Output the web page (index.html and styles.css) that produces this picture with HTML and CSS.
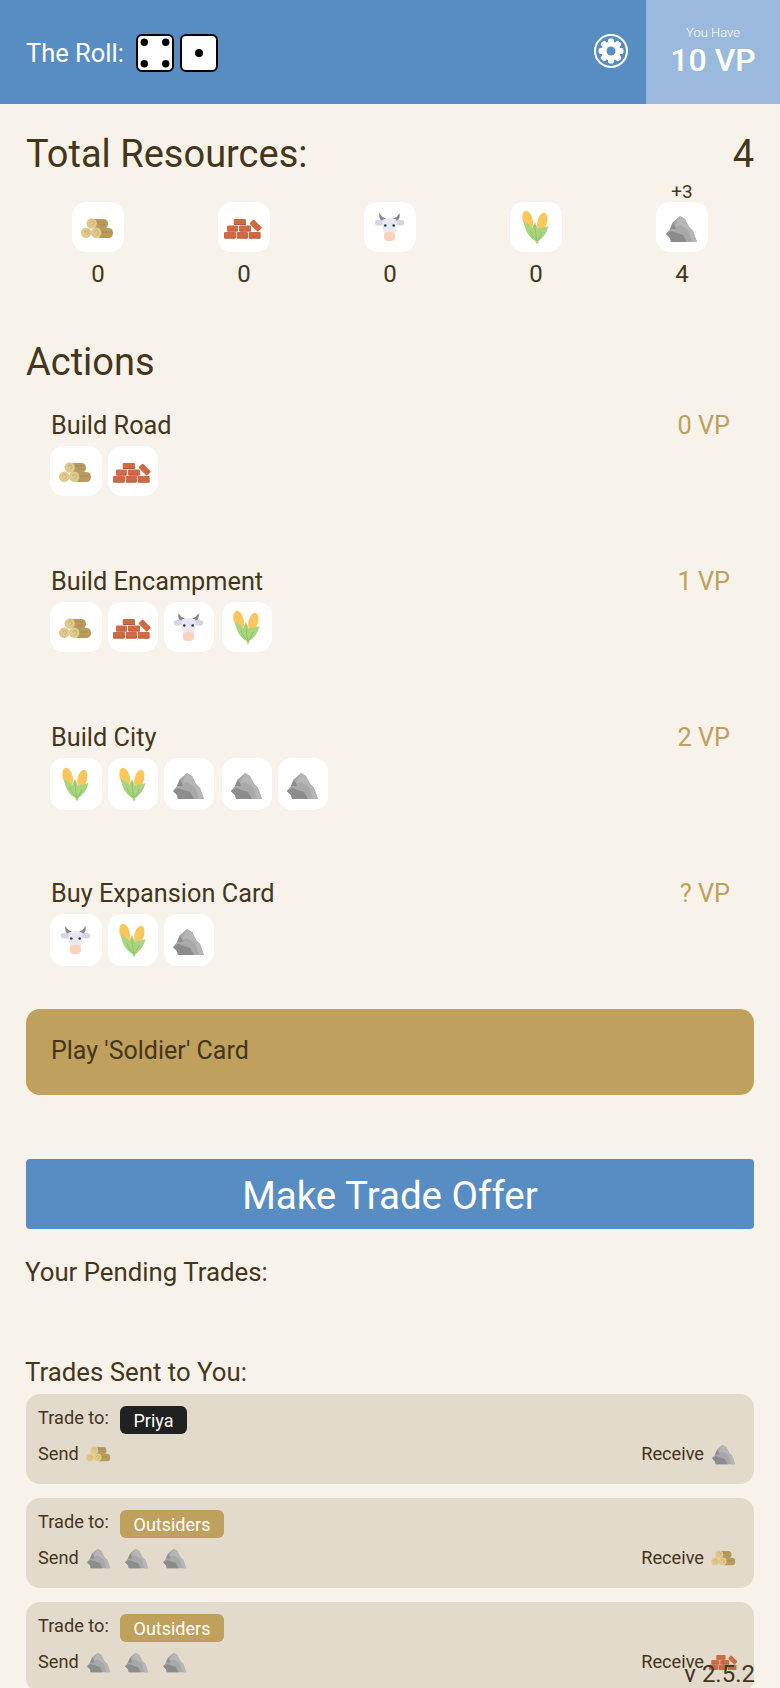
FILE: index.html
```html
<!doctype html>
<html lang="en">

<head>
  <title>Settlers Player</title>
  <meta charset="utf-8" />
  <link rel="stylesheet" href="styles.css">
</head>

<body>
  <!-- shared resource icons, all drawn in a 40x40 box -->
  <svg class="defs" width="0" height="0" aria-hidden="true">
    <symbol id="wood" viewBox="0 0 40 40">
      <rect x="12" y="12" width="18" height="9.5" rx="4.5" fill="#b89c5e" />
      <rect x="18" y="21" width="17" height="10" rx="4.5" fill="#b89c5e" />
      <path d="M18 15h10M23 25h10M22 18h6" stroke="#a58a4e" stroke-width=".8" />
      <circle cx="13.7" cy="16.5" r="5.2" fill="#e0c98c" />
      <circle cx="8.2" cy="25.7" r="5.2" fill="#e0c98c" />
      <circle cx="18.2" cy="25.7" r="5.2" fill="#e0c98c" />
      <path d="M12 16a2 2 0 1 1 2 2M6.500 25.500a2 2 0 1 1 2 2M16.500 25.500a2 2 0 1 1 2 2" fill="none" stroke="#c4a968" stroke-width=".8" />
    </symbol>
    <symbol id="brick" viewBox="0 0 40 40">
      <g fill="#cf6a45">
        <rect x="9.700" y="12" width="12.300" height="6" rx="1" />
        <rect x="3" y="18.500" width="11" height="6" rx="1" />
        <rect x="15" y="18.500" width="12" height="6" rx="1" />
        <rect x="0" y="25" width="12" height="6.500" rx="1" />
        <rect x="12.700" y="25" width="11.300" height="6.500" rx="1" />
        <rect x="24.700" y="25" width="12" height="6.500" rx="1" />
        <rect x="25.700" y="15.700" width="12" height="6" rx="1" transform="rotate(45 31.700 18.700)" />
      </g>
      <path d="M.5 31h11M13.200 31H23.500M25.200 31h11M3.500 24h10M15.500 24h11M10.200 17.500h11.300" stroke="#b8583a" stroke-width="1" />
    </symbol>
    <symbol id="cow" viewBox="0 0 40 40">
      <path d="M9.500 6c-1 4 .5 7.500 4 9l3-3c-3-1-5.500-3-7-6zM29.500 6c1 4-.5 7.500-4 9l-3-3c3-1 5.500-3 7-6z" fill="#8a8a8c" />
      <ellipse cx="9" cy="15.700" rx="4.200" ry="3" fill="#d6d4e6" />
      <ellipse cx="30" cy="15.700" rx="4.200" ry="3" fill="#d6d4e6" />
      <path d="M12.500 13c3-2.500 11-2.500 14 0 .8 5-.6 11-2.500 15h-9c-1.900-4-3.300-10-2.500-15z" fill="#e9e8f2" />
      <rect x="14" y="25" width="11" height="9" rx="4" fill="#fbd3b8" />
      <circle cx="15.300" cy="18.500" r="1.300" fill="#2f3a44" />
      <circle cx="23.700" cy="18.500" r="1.300" fill="#2f3a44" />
    </symbol>
    <symbol id="corn" viewBox="0 0 40 40">
      <ellipse cx="11.700" cy="13" rx="5" ry="9.500" transform="rotate(-15 11.700 13)" fill="#fcc75a" />
      <ellipse cx="26.300" cy="14.700" rx="4.800" ry="9.200" transform="rotate(15 26.300 14.700)" fill="#fcc75a" />
      <path d="M8 15c3 1 6 3 8 6l3-6 3 7c1-1 3-2 4-1l6.500-2c-1.500 7-6 12.500-10 15l-.5 2.500h-2l-.5-2.500c-6-3-10.500-10-11.500-19z" fill="#a9d57f" />
      <path d="M14 23c1 5 4 8 7 11M26 25c-1 4-3 6-5 9M19 18c0 6 1 11 2 16" fill="none" stroke="#8cc263" stroke-width="1" />
    </symbol>
    <symbol id="rock" viewBox="0 0 40 40">
      <path d="M18 9l5 3 4 8 4 4 4 11H9l-1-4-4-4 4-5 3-7z" fill="#a8a8a8" />
      <path d="M18 9l5 3 4 8 4 4 4 11h-5L26 23l-8-5-5 2 3-7z" fill="#b6b6b6" />
      <path d="M4 27l5-3 12 4 4 7H9l-1-4zM11 15l3 7-6 0z" fill="#8c8c8c" />
    </symbol>
  </svg>

  <header class="top-bar">
    <div class="roll">
      <span class="roll-label">The Roll:</span>
      <svg class="die" viewBox="0 0 38 38">
        <rect x="1" y="1" width="36" height="36" rx="5" fill="#fff" stroke="#000" stroke-width="2" />
        <circle cx="8.300" cy="8.300" r="3.700" />
        <circle cx="29.700" cy="8.300" r="3.700" />
        <circle cx="8.300" cy="29.700" r="3.700" />
        <circle cx="29.700" cy="29.700" r="3.700" />
      </svg>
      <svg class="die" viewBox="0 0 38 38">
        <rect x="1" y="1" width="36" height="36" rx="5" fill="#fff" stroke="#000" stroke-width="2" />
        <circle cx="19" cy="19" r="4" />
      </svg>
    </div>
    <svg class="gear" viewBox="0 0 34 34">
      <circle cx="17" cy="17" r="16" fill="none" stroke="#fff" stroke-width="2" />
      <g fill="#fff">
        <circle cx="17" cy="17" r="9.500" />
        <rect x="14" y="4.500" width="6" height="25" rx="2" />
        <rect x="14" y="4.500" width="6" height="25" rx="2" transform="rotate(45 17 17)" />
        <rect x="14" y="4.500" width="6" height="25" rx="2" transform="rotate(90 17 17)" />
        <rect x="14" y="4.500" width="6" height="25" rx="2" transform="rotate(135 17 17)" />
      </g>
      <circle cx="17" cy="17" r="4.500" fill="#588dc4" />
    </svg>
    <div class="score">
      <span class="score-label">You Have</span>
      <span class="score-value">10 VP</span>
    </div>
  </header>

  <main class="content">
    <div class="heading-row">
      <h1 class="heading">Total Resources:</h1>
      <span class="heading">4</span>
    </div>

    <div class="resources">
      <div class="resource">
        <div class="tile"><svg class="icon"><use href="#wood" /></svg></div>
        <span class="count">0</span>
      </div>
      <div class="resource">
        <div class="tile"><svg class="icon"><use href="#brick" /></svg></div>
        <span class="count">0</span>
      </div>
      <div class="resource">
        <div class="tile"><svg class="icon"><use href="#cow" /></svg></div>
        <span class="count">0</span>
      </div>
      <div class="resource">
        <div class="tile"><svg class="icon"><use href="#corn" /></svg></div>
        <span class="count">0</span>
      </div>
      <div class="resource">
        <div class="tile">
          <span class="bonus">+3</span>
          <svg class="icon"><use href="#rock" /></svg>
        </div>
        <span class="count">4</span>
      </div>
    </div>

    <h2 class="heading actions-heading">Actions</h2>

    <div class="actions">
      <div class="action">
        <div class="action-title"><span>Build Road</span><span class="vp">0 VP</span></div>
        <div class="cost">
          <div class="tile"><svg class="icon"><use href="#wood" /></svg></div>
          <div class="tile"><svg class="icon"><use href="#brick" /></svg></div>
        </div>
      </div>
      <div class="action">
        <div class="action-title"><span>Build Encampment</span><span class="vp">1 VP</span></div>
        <div class="cost">
          <div class="tile"><svg class="icon"><use href="#wood" /></svg></div>
          <div class="tile"><svg class="icon"><use href="#brick" /></svg></div>
          <div class="tile"><svg class="icon"><use href="#cow" /></svg></div>
          <div class="tile"><svg class="icon"><use href="#corn" /></svg></div>
        </div>
      </div>
      <div class="action">
        <div class="action-title"><span>Build City</span><span class="vp">2 VP</span></div>
        <div class="cost cost-tall">
          <div class="tile"><svg class="icon"><use href="#corn" /></svg></div>
          <div class="tile"><svg class="icon"><use href="#corn" /></svg></div>
          <div class="tile"><svg class="icon"><use href="#rock" /></svg></div>
          <div class="tile"><svg class="icon"><use href="#rock" /></svg></div>
          <div class="tile"><svg class="icon"><use href="#rock" /></svg></div>
        </div>
      </div>
      <div class="action">
        <div class="action-title"><span>Buy Expansion Card</span><span class="vp">? VP</span></div>
        <div class="cost cost-tall">
          <div class="tile"><svg class="icon"><use href="#cow" /></svg></div>
          <div class="tile"><svg class="icon"><use href="#corn" /></svg></div>
          <div class="tile"><svg class="icon"><use href="#rock" /></svg></div>
        </div>
      </div>
    </div>

    <div class="soldier">Play 'Soldier' Card</div>

    <button class="trade-button">Make Trade Offer</button>

    <h3 class="sub-heading pending">Your Pending Trades:</h3>
    <h3 class="sub-heading sent">Trades Sent to You:</h3>

    <div class="trades">
      <div class="trade">
        <div class="trade-to"><span class="trade-label">Trade to:</span><span class="pill pill-dark">Priya</span></div>
        <div class="trade-items">
          <div class="trade-side">Send <svg class="mini"><use href="#wood" /></svg></div>
          <div class="trade-side">Receive <svg class="mini"><use href="#rock" /></svg></div>
        </div>
      </div>
      <div class="trade">
        <div class="trade-to"><span class="trade-label">Trade to:</span><span class="pill">Outsiders</span></div>
        <div class="trade-items">
          <div class="trade-side">Send <svg class="mini"><use href="#rock" /></svg><svg class="mini"><use href="#rock" /></svg><svg class="mini"><use href="#rock" /></svg></div>
          <div class="trade-side">Receive <svg class="mini"><use href="#wood" /></svg></div>
        </div>
      </div>
      <div class="trade">
        <div class="trade-to"><span class="trade-label">Trade to:</span><span class="pill">Outsiders</span></div>
        <div class="trade-items">
          <div class="trade-side">Send <svg class="mini"><use href="#rock" /></svg><svg class="mini"><use href="#rock" /></svg><svg class="mini"><use href="#rock" /></svg></div>
          <div class="trade-side">Receive <svg class="mini"><use href="#brick" /></svg></div>
        </div>
      </div>
    </div>
  </main>

  <div class="version">v 2.5.2</div>
</body>

</html>
```

FILE: styles.css
```css
html {
  font-family: Roboto, sans-serif;
  font-weight: 400;
  color: #46351a;
}

body {
  position: relative;
  margin: 0;
  height: 1688px;
  overflow: hidden;
  background-color: #f7f3eb;
}

.defs {
  position: absolute;
}

/* top bar */
.top-bar {
  display: flex;
  align-items: stretch;
  height: 104px;
  background-color: #588dc4;
  color: #fff;
}

.roll {
  display: flex;
  align-items: center;
  flex: 1;
  padding: 0 0 0 26px;
  height: 106px;
}

.roll-label {
  font-size: 25.5px;
  margin-right: 12px;
}

.die {
  width: 38px;
  height: 38px;
  margin-right: 6px;
}

.gear {
  width: 34px;
  height: 34px;
  margin: 34px 18px 0 0;
}

.score {
  display: flex;
  flex-direction: column;
  align-items: center;
  width: 134px;
  background-color: #9ab9dd;
}

.score-label {
  margin-top: 25px;
  font-size: 13px;
  line-height: 16px;
  font-weight: 300;
}

.score-value {
  font-size: 32px;
  line-height: 38px;
  font-weight: 500;
}

/* main column */
.content {
  padding: 0 26px;
}

.heading-row {
  display: flex;
  justify-content: space-between;
  margin-top: 27px;
}

.heading {
  margin: 0;
  font-size: 38px;
  line-height: 46px;
  font-weight: 400;
}

.resources {
  display: grid;
  grid-template-columns: repeat(5, 146px);
  margin: 25px -1px 0;
}

.resource {
  display: flex;
  flex-direction: column;
  align-items: center;
}

.tile {
  position: relative;
  display: flex;
  align-items: center;
  justify-content: center;
  width: 52px;
  height: 50px;
  border-radius: 14px;
  background-color: #fff;
}

.icon {
  flex: none;
  width: 40px;
  height: 40px;
}

.bonus {
  position: absolute;
  top: -21px;
  left: 0;
  right: 0;
  text-align: center;
  font-size: 19px;
  line-height: 22px;
}

.count {
  margin-top: 8px;
  font-size: 24px;
  line-height: 28px;
}

.actions-heading {
  margin-top: 51px;
}

.actions {
  display: flex;
  flex-direction: column;
  gap: 70px;
  margin-top: 27px;
  padding-left: 24px;
  padding-right: 24px;
}

.action {
  height: 86px;
}

.action-title {
  display: flex;
  justify-content: space-between;
  padding-left: 1px;
  font-size: 25.3px;
  line-height: 28px;
}

.vp {
  color: #bfa05d;
}

.cost {
  display: flex;
  margin-top: 6px;
}

.cost .tile {
  width: 50px;
  margin-right: 6px;
}

.cost .tile:first-child {
  width: 52px;
}

.cost .tile:nth-child(3) {
  margin-right: 8px;
}

.cost-tall .tile {
  height: 52px;
}

.soldier {
  margin-top: 43px;
  height: 86px;
  padding-left: 25px;
  border-radius: 14px;
  background-color: #bfa05d;
  font-size: 25px;
  line-height: 84px;
}

.trade-button {
  display: block;
  width: 100%;
  height: 70px;
  margin-top: 64px;
  padding: 3px 0 0;
  border: 0;
  border-radius: 4px;
  background-color: #588dc4;
  color: #fff;
  font-family: inherit;
  font-size: 38.5px;
  font-weight: 400;
}

.sub-heading {
  margin: 0 0 0 -1px;
  font-size: 25.8px;
  line-height: 30px;
  font-weight: 400;
}

.pending {
  margin-top: 28px;
}

.sent {
  margin-top: 70px;
}

/* incoming trades */
.trades {
  display: flex;
  flex-direction: column;
  gap: 14px;
  margin-top: 7px;
}

.trade {
  box-sizing: border-box;
  height: 90px;
  padding: 12px 15px 0 12px;
  border-radius: 14px;
  background-color: #e2dbcc;
  font-size: 18.2px;
}

.trade-to {
  display: flex;
  height: 28px;
}

.trade-label {
  width: 82px;
  line-height: 24px;
}

.pill {
  padding: 0 13.5px;
  border-radius: 6px;
  background-color: #bfa05d;
  color: #fff;
  font-size: 18px;
  line-height: 30px;
}

.pill-dark {
  background-color: #212121;
}

.trade-items {
  display: flex;
  justify-content: space-between;
  margin-top: 4px;
}

.trade-side {
  display: flex;
  align-items: center;
  gap: 5px;
  height: 30px;
}

.mini {
  width: 30px;
  height: 30px;
  margin-right: 3px;
}

.mini:last-child {
  margin-right: 0;
}

.version {
  position: absolute;
  right: 25px;
  bottom: 0;
  font-size: 24px;
  line-height: 28px;
}
```
